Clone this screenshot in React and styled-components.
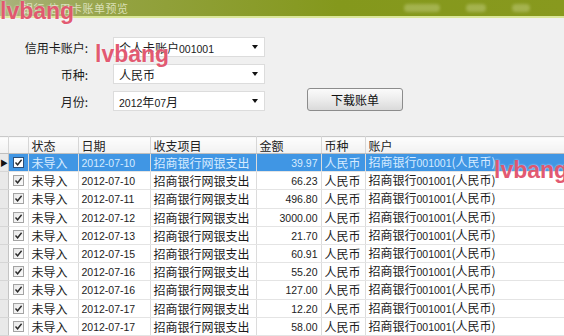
import React from "react";
import styled, { createGlobalStyle } from "styled-components";

const GlobalStyle = createGlobalStyle`
  html, body {
    margin: 0;
    padding: 0;
    background: #f0f0f0;
  }
  body {
    font-family: "Noto Sans CJK SC", "Liberation Sans", sans-serif;
    font-size: 12px;
    color: #1c1c1c;
  }
`;

const Window = styled.div`
  position: relative;
  width: 564px;
  height: 336px;
  overflow: hidden;
  display: flex;
  flex-direction: column;
  background: #f0f0f0;
`;

const TitleBar = styled.div`
  height: 16px;
  flex: none;
  display: flex;
  align-items: center;
  padding-left: 22px;
  gap: 40px;
  border-bottom: 2px solid #dbe79a;
  background: linear-gradient(90deg, #aab27e 0%, #93a240 22%, #84981c 60%, #88991e 100%);
`;

const Title = styled.span`
  font-size: 11px;
  line-height: 16px;
  color: rgba(240, 244, 220, 0.75);
  letter-spacing: 0.5px;
`;

const TitleTools = styled.div`
  margin-left: auto;
  display: flex;
  gap: 26px;
  padding-right: 34px;
`;

const Tool = styled.span`
  width: ${(p) => p.w}px;
  height: 8px;
  border-radius: 4px;
  background: rgba(220, 230, 170, 0.35);
  filter: blur(1.5px);
`;

const Form = styled.div`
  height: 118px;
  flex: none;
  box-sizing: border-box;
  padding-top: 19px;
  display: grid;
  grid-template-columns: 88px 152px 1fr;
  grid-auto-rows: 20px;
  column-gap: 25px;
  row-gap: 7px;
`;

const Label = styled.div`
  grid-column: 1;
  display: flex;
  align-items: center;
  justify-content: flex-end;
  font-size: 12px;
  color: #1a1a1a;
`;

const Select = styled.div`
  grid-column: 2;
  display: flex;
  align-items: center;
  box-sizing: border-box;
  padding-left: 5px;
  padding-right: 6px;
  background: #fff;
  border: 1px solid #dcdcdc;
  font-size: 12px;
  color: #1a1a1a;
`;

const SelectText = styled.span`
  flex: 1;
`;

const Arrow = styled.span`
  width: 0;
  height: 0;
  border-left: 3.5px solid transparent;
  border-right: 3.5px solid transparent;
  border-top: 4px solid #111;
`;

const Button = styled.button`
  grid-column: 3;
  grid-row: 3;
  align-self: end;
  justify-self: start;
  margin-left: 17px;
  width: 96px;
  height: 23px;
  padding: 0;
  border: 1px solid #8c8c8c;
  border-radius: 3px;
  background: linear-gradient(180deg, #fbfbfb 0%, #ececec 50%, #dadada 100%);
  font-family: "Noto Sans CJK SC", sans-serif;
  font-size: 12px;
  color: #111;
`;

const Num = styled.span`
  font-family: "Liberation Sans", "DejaVu Sans", sans-serif;
  font-size: 10.5px;
`;

const Grid = styled.table`
  width: 564px;
  table-layout: fixed;
  border-collapse: collapse;
  background: #fff;
  border-top: 1px solid #c9c9c9;
`;

const HeadCell = styled.th`
  height: 16px;
  padding: 0 0 0 3px;
  text-align: left;
  font-weight: normal;
  font-size: 12px;
  line-height: 15px;
  color: #222;
  white-space: nowrap;
  overflow: hidden;
  background: linear-gradient(180deg, #fdfdfd 0%, #f1f1f1 100%);
  border-right: 1px solid #d6d6d6;
  border-bottom: 1px solid #bfbfbf;
`;

const Row = styled.tr`
  height: 18.2px;
  background: ${(p) => (p.selected ? "#4096e4" : "#fff")};
  color: ${(p) => (p.selected ? "#d6ebff" : "#1c1c1c")};
`;

const Cell = styled.td`
  padding: 0 ${(p) => (p.right ? "3px" : "0")} 0 ${(p) => (p.right ? "0" : "3px")};
  text-align: ${(p) => (p.right ? "right" : "left")};
  vertical-align: middle;
  white-space: nowrap;
  overflow: hidden;
  font-size: 12px;
  line-height: 15px;
  border-right: 1px solid #dcdcdc;
  border-bottom: 1px solid #e4e4e4;
`;

const RowHead = styled.td`
  padding: 0;
  vertical-align: middle;
  background: #e9e9e9;
  border-right: 1px solid #c4c4c4;
  border-bottom: 1px solid #d6d6d6;
  font-size: 8px;
  line-height: 15px;
  color: #111;
  text-align: center;
  overflow: hidden;
`;

const CheckCell = styled.td`
  padding: 0;
  vertical-align: middle;
  border-right: 1px solid #dcdcdc;
  border-bottom: 1px solid #e4e4e4;
`;

const Check = styled.span`
  display: flex;
  align-items: center;
  justify-content: center;
  width: 11px;
  height: 11px;
  margin: 0 auto;
  box-sizing: border-box;
  border: 1px solid ${(p) => (p.selected ? "#2b4f7a" : "#a3a3a3")};
  background: ${(p) =>
    p.selected ? "#fff" : "linear-gradient(135deg, #e9e9e9 0%, #fafafa 100%)"};
`;

const Watermark = styled.div`
  position: absolute;
  left: ${(p) => p.x}px;
  top: ${(p) => p.y}px;
  font-family: "Liberation Sans", sans-serif;
  font-weight: bold;
  font-size: 23px;
  line-height: 23px;
  color: rgba(224, 74, 100, 0.92);
  text-shadow: 0 0 2px rgba(255, 255, 255, 0.85);
  pointer-events: none;
`;

const CheckMark = () => (
  <svg width="9" height="9" viewBox="0 0 9 9" style={{ display: "block" }}>
    <path d="M1.5 4.5 L3.6 6.8 L7.6 1.8" fill="none" stroke="#2a2a2a" strokeWidth="1.4" />
  </svg>
);

const rows = [
  ["2012-07-10", "39.97"],
  ["2012-07-10", "66.23"],
  ["2012-07-11", "496.80"],
  ["2012-07-12", "3000.00"],
  ["2012-07-13", "21.70"],
  ["2012-07-15", "60.91"],
  ["2012-07-16", "55.20"],
  ["2012-07-16", "127.00"],
  ["2012-07-17", "12.20"],
  ["2012-07-17", "58.00"],
];

export default function App() {
  return (
    <Window>
      <GlobalStyle />
      <TitleBar>
        <Title>银行 信用卡账单预览</Title>
        <TitleTools>
          <Tool w={36} />
          <Tool w={20} />
          <Tool w={18} />
        </TitleTools>
      </TitleBar>

      <Form>
        <Label>信用卡账户:</Label>
        <Select>
          <SelectText>
            个人卡账户<Num>001001</Num>
          </SelectText>
          <Arrow />
        </Select>
        <Label>币种:</Label>
        <Select>
          <SelectText>人民币</SelectText>
          <Arrow />
        </Select>
        <Label>月份:</Label>
        <Select>
          <SelectText>
            <Num>2012</Num>年<Num>07</Num>月
          </SelectText>
          <Arrow />
        </Select>
        <Button>下载账单</Button>
      </Form>

      <Grid>
        <colgroup>
          <col style={{ width: 8 }} />
          <col style={{ width: 20 }} />
          <col style={{ width: 50 }} />
          <col style={{ width: 72 }} />
          <col style={{ width: 106 }} />
          <col style={{ width: 65 }} />
          <col style={{ width: 44 }} />
          <col style={{ width: 199 }} />
        </colgroup>
        <thead>
          <tr>
            <HeadCell />
            <HeadCell />
            <HeadCell>状态</HeadCell>
            <HeadCell>日期</HeadCell>
            <HeadCell>收支项目</HeadCell>
            <HeadCell>金额</HeadCell>
            <HeadCell>币种</HeadCell>
            <HeadCell>账户</HeadCell>
          </tr>
        </thead>
        <tbody>
          {rows.map(([date, amount], i) => (
            <Row key={i} selected={i === 0}>
              <RowHead>{i === 0 ? "▶" : ""}</RowHead>
              <CheckCell>
                <Check selected={i === 0}>
                  <CheckMark />
                </Check>
              </CheckCell>
              <Cell>未导入</Cell>
              <Cell>
                <Num>{date}</Num>
              </Cell>
              <Cell>招商银行网银支出</Cell>
              <Cell right>
                <Num>{amount}</Num>
              </Cell>
              <Cell>人民币</Cell>
              <Cell>
                招商银行<Num>001001</Num>(人民币)
              </Cell>
            </Row>
          ))}
        </tbody>
      </Grid>

      <Watermark x={0} y={0}>lvbang</Watermark>
      <Watermark x={95} y={43}>lvbang</Watermark>
      <Watermark x={494} y={159}>lvbang</Watermark>
    </Window>
  );
}
